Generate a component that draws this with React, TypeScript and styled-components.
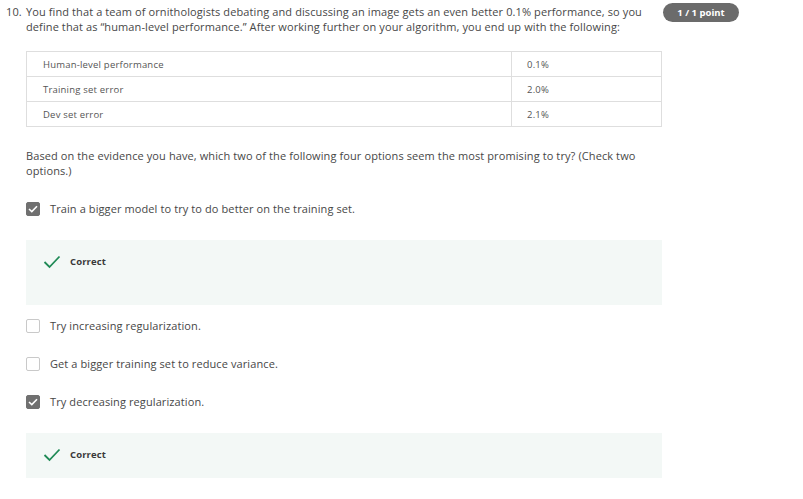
import React from "react";
import styled, { createGlobalStyle } from "styled-components";

const Global = createGlobalStyle`
  html, body { margin: 0; padding: 0; background: #fff; }
  body { font-family: "Open Sans", "Noto Sans", sans-serif; color: #474747; }
`;

const Page = styled.div`
  width: 803px;
  height: 499px;
  overflow: hidden;
  padding: 4px 0 0 6px;
  box-sizing: border-box;
`;

const HeaderRow = styled.div`
  display: flex;
  align-items: flex-start;
`;

const Number = styled.div`
  width: 20px;
  font-size: 11px;
  letter-spacing: 0.1px;
  line-height: 15px;
`;

const QuestionText = styled.div`
  width: 630px;
  font-size: 11px;
  letter-spacing: 0.1px;
  line-height: 15px;
`;

const Badge = styled.div`
  margin-left: 7px;
  margin-top: -1px;
  width: 76px;
  height: 19px;
  border-radius: 10px;
  background: #6b6b6b;
  color: #fff;
  font-weight: 700;
  font-size: 9.5px;
  display: flex;
  align-items: center;
  justify-content: center;
`;

const Body = styled.div`
  margin-left: 20px;
  width: 636px;
  display: flex;
  flex-direction: column;
`;

const Table = styled.table`
  margin-top: 17px;
  width: 636px;
  border-collapse: collapse;
  font-size: 9.5px;
  letter-spacing: 0.2px;
  color: #555;
`;

const Cell = styled.td<{ $w?: number; $pad?: number }>`
  border: 1px solid #dedede;
  height: 24px;
  padding: 0 0 0 ${(p) => p.$pad ?? 16}px;
  width: ${(p) => (p.$w ? `${p.$w}px` : "auto")};
`;

const Prompt = styled.div`
  margin-top: 21px;
  font-size: 11px;
  letter-spacing: 0.1px;
  line-height: 15px;
  width: 620px;
`;

const Option = styled.div<{ $mt: number }>`
  display: flex;
  align-items: center;
  margin-top: ${(p) => p.$mt}px;
  font-size: 11px;
  letter-spacing: 0.1px;
  line-height: 15px;
`;

const Box = styled.div<{ $checked?: boolean }>`
  width: 14px;
  height: 14px;
  box-sizing: border-box;
  border-radius: 2px;
  margin-right: 10px;
  display: flex;
  align-items: center;
  justify-content: center;
  background: ${(p) => (p.$checked ? "#707070" : "#fff")};
  border: 1px solid ${(p) => (p.$checked ? "#707070" : "#c9c9c9")};
`;

const Feedback = styled.div<{ $h: number; $mt: number }>`
  margin-top: ${(p) => p.$mt}px;
  height: ${(p) => p.$h}px;
  background: #f3f8f6;
  display: flex;
  align-items: flex-start;
  padding: 15px 0 0 17px;
  box-sizing: border-box;
`;

const FeedbackLabel = styled.span`
  font-size: 9.5px;
  letter-spacing: 0.1px;
  font-weight: 700;
  color: #3a3a3a;
  margin-left: 9px;
  line-height: 14px;
`;

const BoxCheck = () => (
  <svg width="10" height="8" viewBox="0 0 10 8">
    <polyline points="1,4 3.8,6.6 9,1.2" fill="none" stroke="#fff" strokeWidth="1.6" />
  </svg>
);

const GreenCheck = () => (
  <svg width="18" height="14" viewBox="0 0 18 14">
    <polyline points="1.5,7 6.5,12 16.5,1.5" fill="none" stroke="#1f8a56" strokeWidth="1.8" />
  </svg>
);

export default function App() {
  return (
    <Page>
      <Global />
      <HeaderRow>
        <Number>10.</Number>
        <QuestionText>
          You find that a team of ornithologists debating and discussing an image gets an even better 0.1% performance, so you
          define that as “human-level performance.” After working further on your algorithm, you end up with the following:
        </QuestionText>
        <Badge>1 / 1 point</Badge>
      </HeaderRow>
      <Body>
        <Table>
          <tbody>
            <tr>
              <Cell $w={468}>Human-level performance</Cell>
              <Cell $pad={15}>0.1%</Cell>
            </tr>
            <tr>
              <Cell>Training set error</Cell>
              <Cell $pad={15}>2.0%</Cell>
            </tr>
            <tr>
              <Cell>Dev set error</Cell>
              <Cell $pad={15}>2.1%</Cell>
            </tr>
          </tbody>
        </Table>
        <Prompt>
          Based on the evidence you have, which two of the following four options seem the most promising to try? (Check two
          options.)
        </Prompt>
        <Option $mt={23}>
          <Box $checked>
            <BoxCheck />
          </Box>
          Train a bigger model to try to do better on the training set.
        </Option>
        <Feedback $h={65} $mt={24}>
          <GreenCheck />
          <FeedbackLabel>Correct</FeedbackLabel>
        </Feedback>
        <Option $mt={13}>
          <Box />
          Try increasing regularization.
        </Option>
        <Option $mt={23}>
          <Box />
          Get a bigger training set to reduce variance.
        </Option>
        <Option $mt={23}>
          <Box $checked>
            <BoxCheck />
          </Box>
          Try decreasing regularization.
        </Option>
        <Feedback $h={45} $mt={24}>
          <GreenCheck />
          <FeedbackLabel>Correct</FeedbackLabel>
        </Feedback>
      </Body>
    </Page>
  );
}
